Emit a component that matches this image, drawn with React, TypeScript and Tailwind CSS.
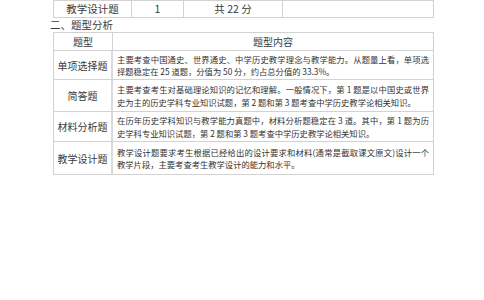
import React from "react";

const font = { fontFamily: '"Noto Sans CJK SC", "Noto Sans", sans-serif' };

const rows: { label: string; lines: string[]; h: string }[] = [
  {
    label: "单项选择题",
    lines: [
      "主要考查中国通史、世界通史、中学历史教学理念与教学能力。从题量上看，单项选",
      "择题稳定在 25 道题，分值为 50 分，约占总分值的 33.3%。",
    ],
    h: "h-[29px]",
  },
  {
    label: "简答题",
    lines: [
      "主要考查考生对基础理论知识的记忆和理解。一般情况下，第 1 题是以中国史或世界",
      "史为主的历史学科专业知识试题，第 2 题和第 3 题考查中学历史教学论相关知识。",
    ],
    h: "h-[32px]",
  },
  {
    label: "材料分析题",
    lines: [
      "在历年历史学科知识与教学能力真题中，材料分析题稳定在 3 道。其中，第 1 题为历",
      "史学科专业知识试题，第 2 题和第 3 题考查中学历史教学论相关知识。",
    ],
    h: "h-[30px]",
  },
  {
    label: "教学设计题",
    lines: [
      "教学设计题要求考生根据已经给出的设计要求和材料(通常是截取课文原文)设计一个",
      "教学片段，主要考查考生教学设计的能力和水平。",
    ],
    h: "h-[32px]",
  },
];

export default function App() {
  return (
    <div className="w-[484px] h-[300px] bg-white text-[#3a3a3a] overflow-hidden" style={font}>
      <div className="ml-[53px] w-[381px] flex flex-col">
        {/* table 1 last row */}
        <div className="flex h-[18px] border border-[#d2d2d2] text-[10.5px] leading-[16px]">
          <div className="w-[78px] flex items-center justify-center border-r border-[#d2d2d2]">教学设计题</div>
          <div className="w-[52px] flex items-center justify-center border-r border-[#d2d2d2]">1</div>
          <div className="w-[99px] flex items-center justify-center border-r border-[#d2d2d2]">共 22 分</div>
          <div className="flex-1"></div>
        </div>
        {/* heading */}
        <div className="-ml-[3px] h-[14px] text-[10.5px] leading-[14px] mt-[0px]">二、题型分析</div>
        {/* table 2 */}
        <div className="flex flex-col border border-[#d2d2d2]">
          <div className="flex h-[18px] text-[10px] border-b border-[#d2d2d2]">
            <div className="w-[59px] flex items-center justify-center border-r border-[#d2d2d2]">题型</div>
            <div className="flex-1 flex items-center justify-center">题型内容</div>
          </div>
          {rows.map((r, i) => (
            <div
              key={r.label}
              className={`flex ${r.h} ${i < rows.length - 1 ? "border-b border-[#d2d2d2]" : ""}`}
            >
              <div className="w-[59px] flex items-center justify-center border-r-2 border-[#dadada] text-[10px]">
                {r.label}
              </div>
              <div className="flex-1 flex flex-col justify-center px-[4px] text-[8.3px] leading-[12.5px] text-[#333]">
                <div className="text-justify [text-align-last:justify] whitespace-nowrap">{r.lines[0]}</div>
                <div className="whitespace-nowrap">{r.lines[1]}</div>
              </div>
            </div>
          ))}
        </div>
      </div>
    </div>
  );
}
